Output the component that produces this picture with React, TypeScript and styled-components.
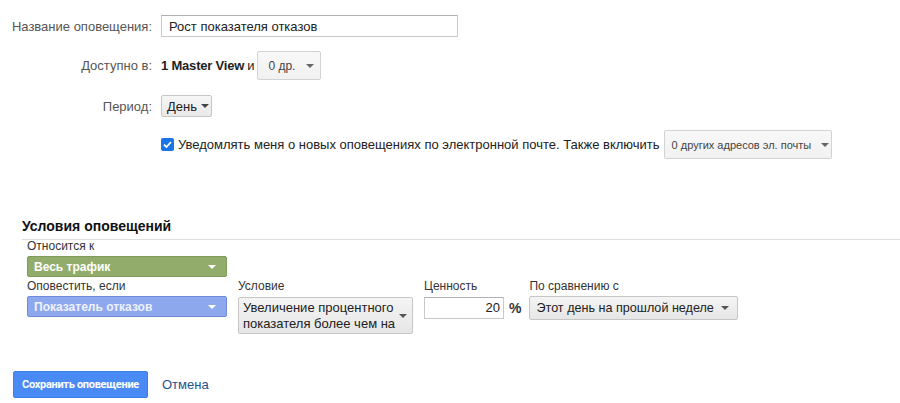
import React from "react";
import styled, { createGlobalStyle } from "styled-components";

const Global = createGlobalStyle`
  html, body { margin: 0; padding: 0; background: #fff; }
  body { font-family: "Liberation Sans", Arial, sans-serif; font-size: 13px; color: #222; }
`;

const Page = styled.div`
  width: 900px;
  height: 403px;
  position: relative;
  overflow: hidden;
`;

const Form = styled.div`
  display: flex;
  flex-direction: column;
  padding-top: 15px;
`;

const Row = styled.div<{ $mt?: number; $h: number }>`
  display: flex;
  align-items: center;
  gap: 9px;
  height: ${(p) => p.$h}px;
  margin-top: ${(p) => p.$mt ?? 0}px;
`;

const Label = styled.div`
  width: 152px;
  text-align: right;
  color: #555;
  font-size: 13px;
  flex-shrink: 0;
`;

const Spacer = styled.div`
  width: 152px;
  flex-shrink: 0;
`;

const TextInput = styled.div`
  box-sizing: border-box;
  width: 297px;
  height: 22px;
  border: 1px solid #c9c9c9;
  border-top-color: #b0b0b0;
  padding: 0 7px;
  display: flex;
  align-items: center;
  font-size: 13px;
  color: #222;
`;

const Bold = styled.span`
  font-weight: bold;
  color: #222;
  letter-spacing: -0.2px;
`;

const Inline = styled.div<{ $gap?: number }>`
  display: flex;
  align-items: center;
  gap: ${(p) => p.$gap ?? 0}px;
`;

const Arrow = styled.span<{ $c?: string }>`
  display: inline-block;
  width: 0;
  height: 0;
  border-left: 4px solid transparent;
  border-right: 4px solid transparent;
  border-top: 4px solid ${(p) => p.$c ?? "#555"};
`;

const GrayButton = styled.div<{ $w: number; $h: number; $pl: number; $gap: number; $fs?: number; $ml?: number }>`
  box-sizing: border-box;
  width: ${(p) => p.$w}px;
  height: ${(p) => p.$h}px;
  margin-left: ${(p) => p.$ml ?? 0}px;
  border: 1px solid #d3d3d3;
  border-radius: 2px;
  background: linear-gradient(#f8f8f8, #f1f1f1);
  display: flex;
  align-items: center;
  padding-left: ${(p) => p.$pl}px;
  gap: ${(p) => p.$gap}px;
  font-size: ${(p) => p.$fs ?? 12}px;
  color: #444;
  white-space: nowrap;
`;

const PeriodButton = styled.div`
  box-sizing: border-box;
  width: 51px;
  height: 22px;
  border: 1px solid #c6c6c6;
  border-radius: 2px;
  background: linear-gradient(#f6f6f6, #e9e9e9);
  display: flex;
  align-items: center;
  padding-left: 5px;
  gap: 4px;
  font-size: 13px;
  color: #222;
`;

const Check = styled.span`
  width: 13px;
  height: 13px;
  border-radius: 2px;
  background: #1a73e8;
  display: inline-flex;
  align-items: center;
  justify-content: center;
  margin-right: 4px;
`;

const CheckText = styled.span`
  font-size: 13px;
  color: #222;
  margin-right: 4px;
`;

const Section = styled.div`
  margin-top: 59px;
`;

const SectionHead = styled.div`
  margin-left: 22px;
  font-weight: bold;
  font-size: 14px;
  color: #111;
  padding-bottom: 5px;
  border-bottom: 1px solid #dedede;
`;

const Cond = styled.div`
  padding-left: 27px;
  display: flex;
  flex-direction: column;
`;

const FieldLabel = styled.div<{ $mt?: number }>`
  font-size: 12px;
  color: #333;
  line-height: 14px;
  height: 14px;
  margin-top: ${(p) => p.$mt ?? 2}px;
  margin-bottom: 3px;
`;

const ColorSelect = styled.div<{ $bg: string; $bd: string; $fg: string }>`
  box-sizing: border-box;
  width: 200px;
  height: 21px;
  border: 1px solid ${(p) => p.$bd};
  border-radius: 2px;
  background: ${(p) => p.$bg};
  color: ${(p) => p.$fg};
  font-weight: bold;
  font-size: 12px;
  display: flex;
  align-items: center;
  justify-content: space-between;
  padding: 0 10px 0 6px;
`;

const CondRow = styled.div`
  display: flex;
  align-items: flex-start;
`;

const Col = styled.div<{ $ml: number }>`
  display: flex;
  flex-direction: column;
  margin-left: ${(p) => p.$ml}px;
`;

const MultiSelect = styled.div`
  box-sizing: border-box;
  width: 175px;
  height: 37px;
  margin-top: 1px;
  border: 1px solid #c6c6c6;
  border-radius: 2px;
  background: linear-gradient(#f4f4f4, #e6e6e6);
  display: flex;
  align-items: flex-start;
  padding: 2px 5px 0 4px;
  font-size: 13px;
  line-height: 16px;
  color: #222;
  justify-content: space-between;
`;

const ArrowWrap = styled.span`
  padding-top: 6px;
`;

const ValueRow = styled.div`
  display: flex;
  align-items: center;
  gap: 5px;
  margin-top: 1px;
`;

const NumInput = styled.div`
  box-sizing: border-box;
  width: 80px;
  height: 22px;
  border: 1px solid #c9c9c9;
  border-top-color: #b0b0b0;
  text-align: right;
  padding-right: 3px;
  line-height: 20px;
  font-size: 13px;
  color: #222;
`;

const Percent = styled.span`
  font-size: 14px;
  font-weight: bold;
  color: #333;
`;

const CompareSelect = styled.div`
  box-sizing: border-box;
  width: 209px;
  height: 24px;
  border: 1px solid #c6c6c6;
  border-radius: 2px;
  background: linear-gradient(#f4f4f4, #e6e6e6);
  display: flex;
  align-items: center;
  justify-content: space-between;
  padding: 0 8px 0 6px;
  font-size: 12.6px;
  color: #222;
  white-space: nowrap;
`;

const Actions = styled.div`
  margin-top: 37px;
  padding-left: 13px;
  display: flex;
  align-items: center;
  gap: 14px;
`;

const Primary = styled.div`
  box-sizing: border-box;
  width: 135px;
  height: 27px;
  background: #4a8af4;
  border: 1px solid #3f7de6;
  border-radius: 2px;
  color: #fff;
  font-family: Roboto, "Liberation Sans", sans-serif;
  font-weight: bold;
  font-size: 11px;
  letter-spacing: -0.3px;
  display: flex;
  align-items: center;
  justify-content: center;
`;

const Link = styled.span`
  color: #24508f;
  font-size: 13px;
`;

export default function App() {
  return (
    <Page>
      <Global />
      <Form>
        <Row $h={22}>
          <Label>Название оповещения:</Label>
          <TextInput>Рост показателя отказов</TextInput>
        </Row>
        <Row $h={29} $mt={14}>
          <Label>Доступно в:</Label>
          <Inline $gap={3}>
            <Bold>1 Master View</Bold>
            <span>и</span>
            <GrayButton $w={64} $h={29} $pl={10} $gap={11} $fs={12}>
              0 др. <Arrow $c="#666" />
            </GrayButton>
          </Inline>
        </Row>
        <Row $h={22} $mt={15}>
          <Label>Период:</Label>
          <PeriodButton>
            День <Arrow $c="#444" />
          </PeriodButton>
        </Row>
        <Row $h={29} $mt={13}>
          <Spacer />
          <Inline>
            <Check>
              <svg width="11" height="11" viewBox="0 0 11 11">
                <path d="M2 5.6 L4.4 8 L9 3" stroke="#fff" strokeWidth="1.8" fill="none" />
              </svg>
            </Check>
            <CheckText>Уведомлять меня о новых оповещениях по электронной почте. Также включить</CheckText>
            <GrayButton $w={168} $h={29} $pl={7} $gap={10} $fs={11}>
              0 других адресов эл. почты <Arrow $c="#666" />
            </GrayButton>
          </Inline>
        </Row>
      </Form>
      <Section>
        <SectionHead>Условия оповещений</SectionHead>
        <Cond>
          <FieldLabel $mt={-1}>Относится к</FieldLabel>
          <ColorSelect $bg="#92ac6b" $bd="#7f9a5b" $fg="#fff">
            Весь трафик <Arrow $c="#fff" />
          </ColorSelect>
          <CondRow>
            <Col $ml={0}>
              <FieldLabel>Оповестить, если</FieldLabel>
              <ColorSelect $bg="#8ea8ee" $bd="#6f8ad8" $fg="#eef2ff">
                Показатель отказов <Arrow $c="#fff" />
              </ColorSelect>
            </Col>
            <Col $ml={11}>
              <FieldLabel>Условие</FieldLabel>
              <MultiSelect>
                <span>
                  Увеличение процентного
                  <br />
                  показателя более чем на
                </span>
                <ArrowWrap>
                  <Arrow $c="#555" />
                </ArrowWrap>
              </MultiSelect>
            </Col>
            <Col $ml={11}>
              <FieldLabel>Ценность</FieldLabel>
              <ValueRow>
                <NumInput>20</NumInput>
                <Percent>%</Percent>
              </ValueRow>
            </Col>
            <Col $ml={8}>
              <FieldLabel>По сравнению с</FieldLabel>
              <CompareSelect>
                Этот день на прошлой неделе <Arrow $c="#555" />
              </CompareSelect>
            </Col>
          </CondRow>
        </Cond>
      </Section>
      <Actions>
        <Primary>Сохранить оповещение</Primary>
        <Link>Отмена</Link>
      </Actions>
    </Page>
  );
}
